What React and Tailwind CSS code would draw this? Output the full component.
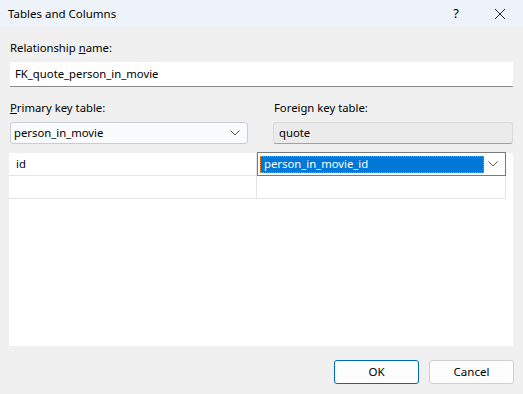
import React from "react";

const font = { fontFamily: "'Noto Sans', 'Open Sans', sans-serif" };

function Chevron({ className = "" }) {
  return (
    <svg width="10" height="6" viewBox="0 0 10 6" className={className}>
      <path d="M0.5 0.5 L5 5 L9.5 0.5" fill="none" stroke="#555" strokeWidth="1" />
    </svg>
  );
}

export default function App() {
  return (
    <div className="w-[523px] h-[394px] bg-[#f0f0f0] flex flex-col text-[11.3px] text-black overflow-hidden" style={font}>
      {/* title bar */}
      <div className="h-[27px] bg-[#eef3f9] flex items-center shrink-0">
        <span className="pl-[8px] flex-1 text-[11.5px]">Tables and Columns</span>
        <span className="w-[30px] text-center text-[13px] mr-[14px]">?</span>
        <div className="w-[30px] flex justify-center mr-[8px]">
          <svg width="12" height="12" viewBox="0 0 12 12">
            <path d="M1 1 L11 11 M11 1 L1 11" stroke="#222" strokeWidth="1" />
          </svg>
        </div>
      </div>

      {/* relationship name */}
      <div className="px-[10px] mt-[13px] leading-[16px]">
        Relationship <span className="underline">n</span>ame:
      </div>
      <div className="mx-[10px] mt-[6px] h-[25px] bg-white border-b border-[#8a8a8a] flex items-center px-[5px]">
        FK_quote_person_in_movie
      </div>

      {/* key tables */}
      <div className="flex mt-[13px] px-[10px]">
        <div className="w-[238px]">
          <div className="leading-[16px]">
            <span className="underline">P</span>rimary key table:
          </div>
          <div className="mt-[6px] h-[22px] bg-[#fafbfd] border border-[#c6cdd6] rounded-[3px] flex items-center px-[3px]">
            <span className="flex-1">person_in_movie</span>
            <Chevron className="mr-[4px]" />
          </div>
        </div>
        <div className="ml-[25px] w-[240px]">
          <div className="leading-[16px] pl-[1px]">Foreign key table:</div>
          <div className="mt-[6px] h-[22px] bg-[#ebebeb] border border-[#dadada] border-b-[#a0a0a0] rounded-[3px] flex items-center px-[5px]">
            quote
          </div>
        </div>
      </div>

      {/* columns grid */}
      <div className="ml-[9px] w-[504px] h-[193px] mt-[9px] bg-white">
        <div className="w-[497px]">
          <div className="flex h-[23px] border-b border-[#e4e4e4]">
            <div className="w-[248px] border-r border-[#e4e4e4] flex items-center pl-[7px]">id</div>
            <div className="flex-1 border border-[#7a7a7a] -mt-px flex items-center pl-[2px] pr-[7px] h-[24px]">
              <div className="flex-1 h-[17px] bg-[#0078d7] border border-dotted border-[#f08020] text-white flex items-center pl-[3px] mr-[4px]">
                person_in_movie_id
              </div>
              <Chevron />
            </div>
          </div>
          <div className="flex h-[23px] border-b border-[#e4e4e4]">
            <div className="w-[248px] border-r border-[#e4e4e4]"></div>
            <div className="flex-1 border-r border-[#e4e4e4]"></div>
          </div>
        </div>
      </div>

      {/* buttons */}
      <div className="flex justify-end mt-[14px] pr-[9px] gap-[10px]">
        <button className="w-[85px] h-[24px] bg-[#fdfdfd] border border-[#0067c0] rounded-[3px] text-[11.5px]">
          OK
        </button>
        <button className="w-[85px] h-[24px] bg-[#fdfdfd] border border-[#d0d0d0] rounded-[3px] text-[11.5px]">
          Cancel
        </button>
      </div>
    </div>
  );
}
